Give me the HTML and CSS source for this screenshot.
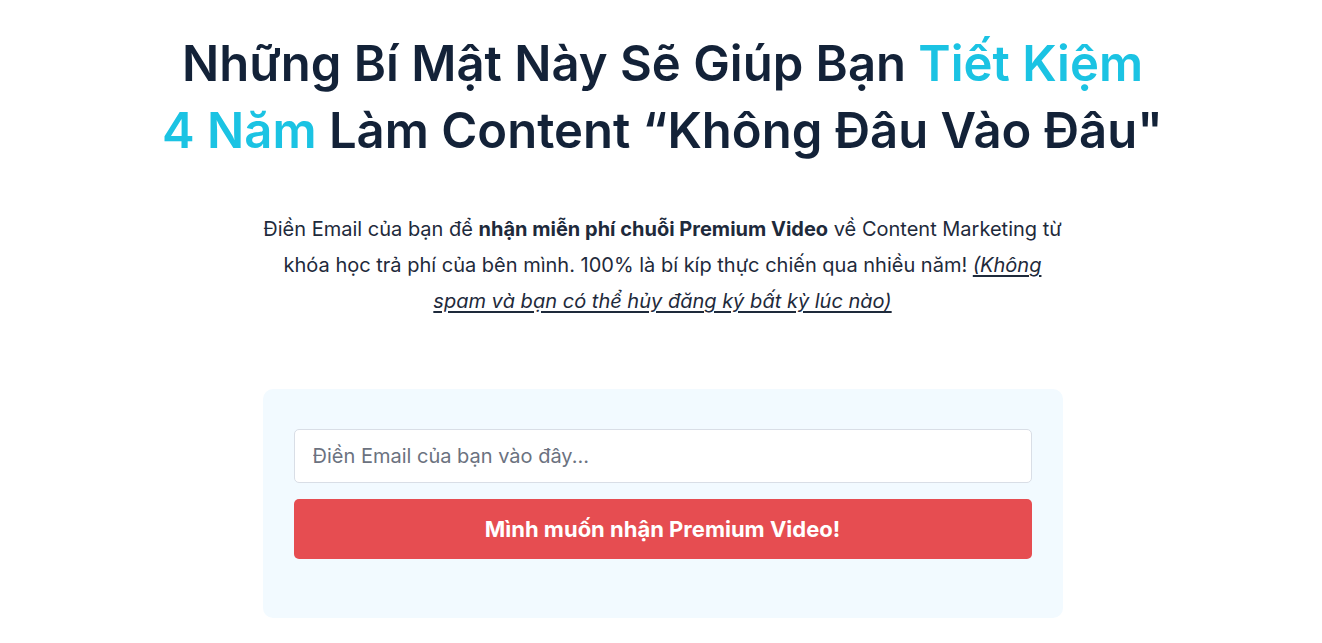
FILE: index.html
```html
<!DOCTYPE html>
<html lang="vi">
<head>
<meta charset="utf-8">
<title>Premium Video</title>
<link rel="stylesheet" href="styles.css">
</head>
<body>
<main class="page">
  <h1 class="title">Những Bí Mật Này Sẽ Giúp Bạn <span class="accent">Tiết Kiệm</span><br><span class="accent">4 Năm</span> Làm Content “Không Đâu Vào Đâu"</h1>
  <p class="lead">Điền Email của bạn để <strong>nhận miễn phí chuỗi Premium Video</strong> về Content Marketing từ khóa học trả phí của bên mình. 100% là bí kíp thực chiến qua nhiều năm! <em class="note">(Không spam và bạn có thể hủy đăng ký bất kỳ lúc nào)</em></p>
  <form class="card" onsubmit="return false">
    <input class="email" type="email" placeholder="Điền Email của bạn vào đây...">
    <button class="submit" type="submit">Mình muốn nhận Premium Video!</button>
  </form>
</main>
</body>
</html>
```
FILE: styles.css
```css
* { box-sizing: border-box; }
html, body { margin: 0; padding: 0; background: #fff; }
body { font-family: Inter, "Noto Sans", sans-serif; color: #132238; }
.page { display: flex; flex-direction: column; align-items: center; padding: 30px 0 0 3px; }
.title {
  margin: 0;
  font-size: 49px;
  line-height: 67px;
  font-weight: 600;
  text-align: center;
  color: #132238;
}
.accent { color: #1bc3e3; }
.lead {
  margin: 47px 0 0;
  width: 800px;
  font-size: 20px;
  line-height: 36px;
  text-align: center;
  color: #1e2a3b;
}
.lead strong { font-weight: 700; }
.note { text-decoration: underline; text-underline-offset: 3px; }
.card {
  margin-top: 70px;
  width: 800px;
  background: #f2faff;
  border-radius: 10px;
  padding: 40px 31px 59px;
  display: flex;
  flex-direction: column;
  gap: 16px;
}
.email {
  height: 54px;
  border: 1px solid #d9dee6;
  border-radius: 5px;
  background: #fff;
  padding: 0 18px;
  font-family: inherit;
  font-size: 20px;
  color: #132238;
  outline: none;
}
.email::placeholder { color: #6b7280; }
.submit {
  height: 60px;
  border: 0;
  border-radius: 5px;
  background: #e64d51;
  color: #fff;
  font-family: inherit;
  font-size: 22px;
  font-weight: 700;
  cursor: pointer;
}
```
